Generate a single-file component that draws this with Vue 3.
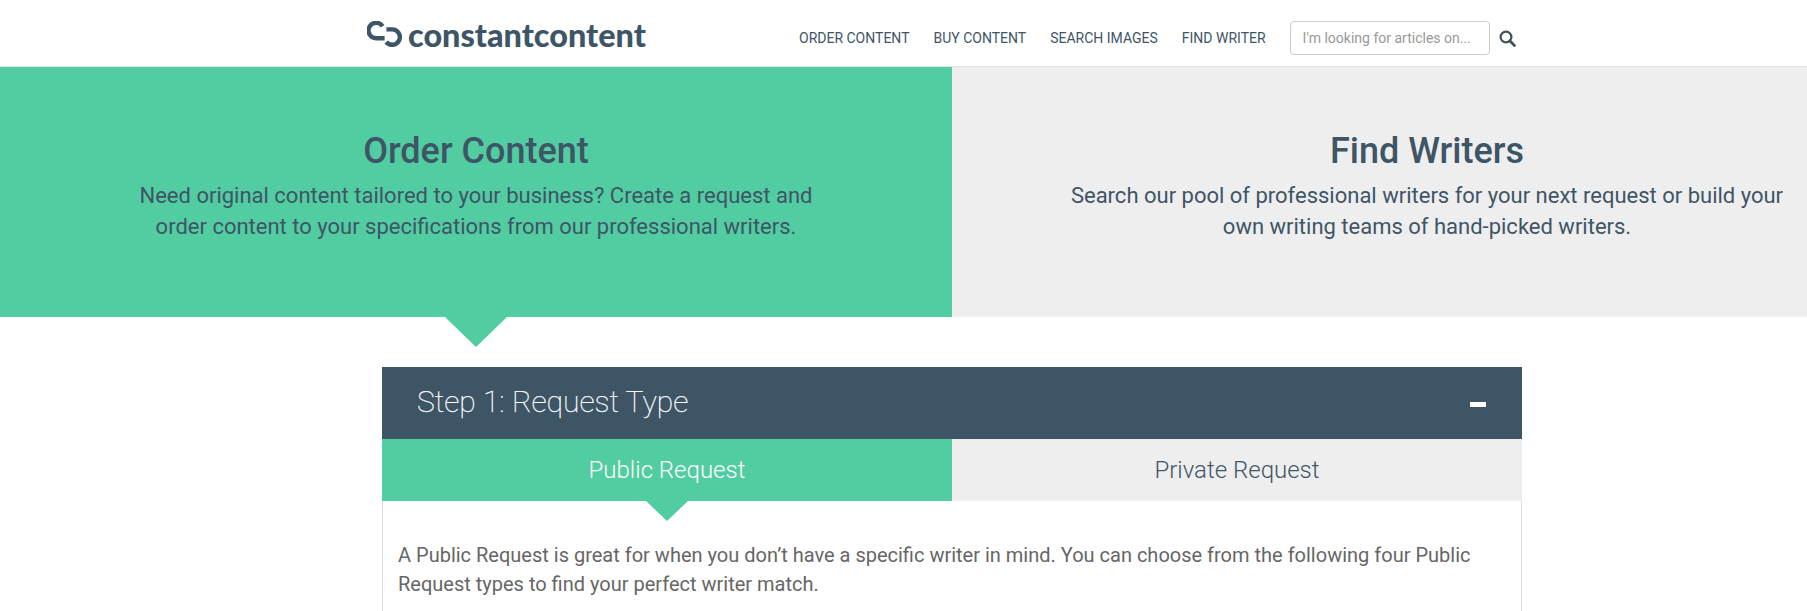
<script setup>
const navItems = ['ORDER CONTENT', 'BUY CONTENT', 'SEARCH IMAGES', 'FIND WRITER']
</script>

<template>
  <div class="page">
    <header class="topbar">
      <a class="logo">
        <svg class="logo-mark" width="35" height="26" viewBox="0 0 35 26" fill="none" stroke="#3e5566" stroke-width="4.4">
          <path d="M15.6 5.2 A7.7 7.7 0 1 0 9.4 17.2 H17.6" />
          <path d="M19.4 8.4 H25.4 A7.7 7.7 0 1 1 19.2 21" />
        </svg>
        <span class="logo-text">constantcontent</span>
      </a>
      <nav class="nav">
        <a v-for="item in navItems" :key="item" class="nav-link">{{ item }}</a>
      </nav>
      <input class="search" type="text" placeholder="I'm looking for articles on..." />
      <svg class="search-icon" width="17" height="17" viewBox="0 0 17 17" fill="none" stroke="#414f59">
        <circle cx="7" cy="7" r="5.4" stroke-width="2.2" />
        <path d="M10.8 10.8 L15.4 15.4" stroke-width="2.8" stroke-linecap="round" />
      </svg>
    </header>

    <section class="hero">
      <div class="hero-panel green">
        <h1>Order Content</h1>
        <p>Need original content tailored to your business? Create a request and<br />order content to your specifications from our professional writers.</p>
        <span class="hero-arrow"></span>
      </div>
      <div class="hero-panel grey">
        <h1>Find Writers</h1>
        <p>Search our pool of professional writers for your next request or build your<br />own writing teams of hand-picked writers.</p>
      </div>
    </section>

    <section class="step">
      <div class="step-head">
        <h2>Step 1: Request Type</h2>
        <span class="collapse"></span>
      </div>
      <div class="tabs">
        <div class="tab active">Public Request<span class="tab-arrow"></span></div>
        <div class="tab">Private Request</div>
      </div>
      <div class="step-body">
        <p>A Public Request is great for when you don’t have a specific writer in mind. You can choose from the following four Public Request types to find your perfect writer match.</p>
      </div>
    </section>
  </div>
</template>

<style>
html, body { margin: 0; overflow: hidden; background: #fff; }
</style>

<style scoped>
.page {
  width: 1807px;
  height: 611px;
  overflow: hidden;
  font-family: Roboto, "Liberation Sans", sans-serif;
  color: #3e5566;
}
.topbar {
  display: flex;
  align-items: center;
  box-sizing: border-box;
  height: 67px;
  padding-top: 10px;
  padding-left: 367px;
  border-bottom: 1px solid #e3e3e3;
}
.logo { display: flex; align-items: center; gap: 6px; width: 432px; margin-top: -6px; }
.logo-mark { flex: none; margin-top: -3px; }
.logo-text {
  font-family: Lato, "Open Sans", sans-serif;
  font-weight: 900;
  font-size: 32.4px;
  color: #3e5566;
  line-height: 1;
}
.nav { display: flex; gap: 24px; margin-right: 24px; }
.nav-link { font-size: 14px; color: #3e5566; white-space: nowrap; }
.search {
  box-sizing: border-box;
  width: 200px;
  height: 34px;
  padding: 0 12px;
  border: 1px solid #ccc;
  border-radius: 4px;
  font: 14px Roboto, sans-serif;
  color: #555;
  background: #fff;
}
.search::placeholder { color: #999; opacity: 1; }
.search-icon { margin-left: 9px; }
.hero { display: flex; width: 1904px; height: 250px; }
.hero-panel {
  position: relative;
  box-sizing: border-box;
  width: 952px;
  flex: none;
  padding-top: 62px;
  text-align: center;
}
.green { background: #52cca1; }
.grey { background: #eee; width: 950px; }
.hero-panel h1 {
  margin: 0 0 7px;
  font-size: 36px;
  line-height: 44px;
  font-weight: 500;
  color: #3e5566;
}
.hero-panel p {
  margin: 0;
  font-size: 22px;
  line-height: 31px;
  color: #3e5566;
}
.hero-arrow {
  position: absolute;
  left: 445px;
  top: 100%;
  width: 0;
  height: 0;
  border-left: 31px solid transparent;
  border-right: 31px solid transparent;
  border-top: 30px solid #52cca1;
}
.step { width: 1140px; margin: 50px 0 0 382px; }
.step-head {
  display: flex;
  align-items: center;
  justify-content: space-between;
  height: 72px;
  padding: 0 36px 0 35px;
  background: #3e5566;
}
.step-head h2 {
  margin: -4px 0 0;
  font-size: 30px;
  font-weight: 100;
  -webkit-text-stroke: 0.25px #fff;
  color: #fff;
}
.collapse { width: 16px; height: 5px; background: #fff; margin-top: 2px; }
.tabs { display: flex; height: 62px; }
.tab {
  position: relative;
  flex: 1;
  display: flex;
  align-items: center;
  justify-content: center;
  font-size: 24px;
  font-weight: 300;
  background: #eee;
  color: #3e5566;
}
.tab.active { background: #52cca1; color: #fff; }
.tab-arrow {
  position: absolute;
  left: 50%;
  top: 100%;
  margin-left: -21px;
  width: 0;
  height: 0;
  border-left: 21px solid transparent;
  border-right: 21px solid transparent;
  border-top: 20px solid #52cca1;
}
.step-body {
  border: 1px solid #ddd;
  border-top: 0;
  padding: 40px 15px 0;
  height: 200px;
}
.step-body p {
  margin: 0;
  font-size: 20px;
  line-height: 28.5px;
  color: #666;
}
</style>
